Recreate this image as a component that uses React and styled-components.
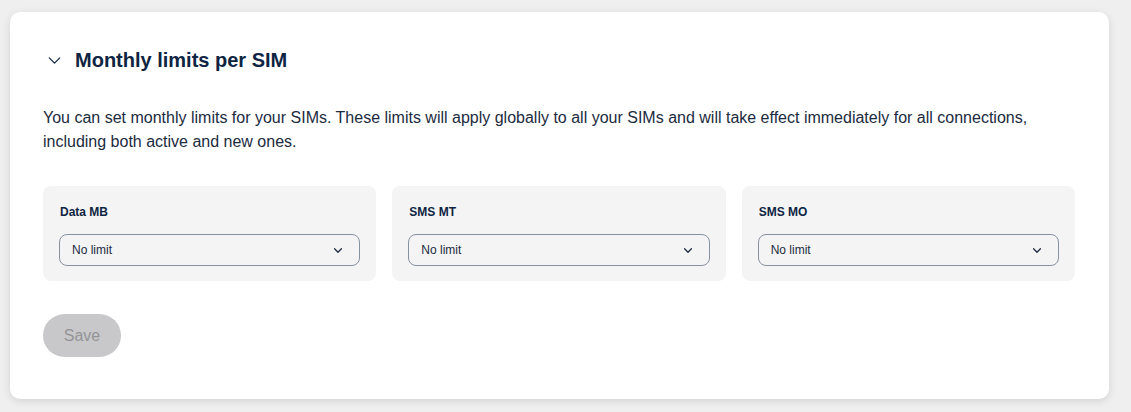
import React from 'react'
import styled, { createGlobalStyle } from 'styled-components'

const GlobalStyle = createGlobalStyle`
  body {
    margin: 0;
    background: #efefef;
    font-family: "Liberation Sans", Arial, Helvetica, sans-serif;
  }
`

const Page = styled.div`
  padding: 12px 22px 13px 10px;
`

const Card = styled.section`
  background: #fff;
  border-radius: 10px;
  box-shadow: 0 2px 8px rgba(0, 0, 0, 0.12);
  padding: 36px 34px 42px 33px;
`

const Header = styled.div`
  display: flex;
  align-items: center;
  gap: 14px;
  height: 24px;
  color: #0e2442;
`

const Chevron = styled.svg`
  display: block;
  flex: none;
  margin-left: ${props => props.$offset || 0}px;
`

const Title = styled.h2`
  margin: 0;
  font-size: 20px;
  font-weight: 700;
  color: #0e2442;
`

const Intro = styled.p`
  margin: 34px 0 0;
  font-size: 16px;
  line-height: 24px;
  color: #1c2b40;
`

const Limits = styled.div`
  display: grid;
  grid-template-columns: repeat(3, 1fr);
  gap: 16px;
  margin-top: 32px;
`

const LimitBox = styled.div`
  background: #f4f4f4;
  border-radius: 8px;
  padding: 19px 16px 15px 16px;
`

const Label = styled.div`
  font-size: 12px;
  font-weight: 700;
  color: #0e2442;
  line-height: 14px;
  padding-left: 1px;
`

const Select = styled.div`
  margin-top: 15px;
  height: 32px;
  box-sizing: border-box;
  border: 1px solid #8792a1;
  border-radius: 8px;
  display: flex;
  align-items: center;
  justify-content: space-between;
  padding: 0 17px 0 12px;
  font-size: 12px;
  color: #1c2b40;
`

const SaveButton = styled.button`
  margin-top: 33px;
  width: 78px;
  height: 43px;
  border: none;
  border-radius: 22px;
  background: #c8c8ca;
  color: #939396;
  font-family: inherit;
  font-size: 16px;
  cursor: default;
`

const DownIcon = ({ width, height, stroke, offset }) =>
  <Chevron width={width} height={height} viewBox="0 0 14 8" fill="none" $offset={offset}>
    <path d="M1 1l6 6 6-6" stroke="currentColor" strokeWidth={stroke} strokeLinecap="round" strokeLinejoin="round"/>
  </Chevron>

const LimitField = ({ label, value }) =>
  <LimitBox>
    <Label>{label}</Label>
    <Select>
      <span>{value}</span>
      <DownIcon width={8} height={5} stroke={2.2}/>
    </Select>
  </LimitBox>

const fields = ['Data MB', 'SMS MT', 'SMS MO']

const App = () =>
  <Page>
    <GlobalStyle/>
    <Card>
      <Header>
        <DownIcon width={13} height={7} stroke={1.4} offset={5}/>
        <Title>Monthly limits per SIM</Title>
      </Header>
      <Intro>
        You can set monthly limits for your SIMs. These limits will apply globally to all your SIMs and will take effect immediately for all connections, including both active and new ones.
      </Intro>
      <Limits>
        {fields.map(f => <LimitField key={f} label={f} value="No limit"/>)}
      </Limits>
      <SaveButton disabled>Save</SaveButton>
    </Card>
  </Page>

export default App
